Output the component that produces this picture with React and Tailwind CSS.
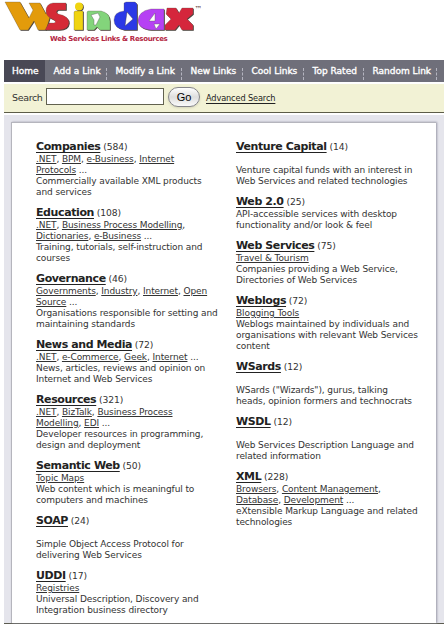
import React from "react";

const left = [
  { name: "Companies", count: 584, lines: [[".NET", "BPM", "e-Business", "Internet"], ["Protocols"], "Commercially available XML products", "and services"], tails: ["", " ..."] },
  { name: "Education", count: 108, lines: [[".NET", "Business Process Modelling"], ["Dictionaries", "e-Business"], "Training, tutorials, self-instruction and", "courses"], tails: [",", " ..."] },
  { name: "Governance", count: 46, lines: [["Governments", "Industry", "Internet", "Open"], ["Source"], "Organisations responsible for setting and", "maintaining standards"], tails: ["", " ..."] },
  { name: "News and Media", count: 72, lines: [[".NET", "e-Commerce", "Geek", "Internet"], "News, articles, reviews and opinion on", "Internet and Web Services"], tails: [" ..."] },
  { name: "Resources", count: 321, lines: [[".NET", "BizTalk", "Business Process"], ["Modelling", "EDI"], "Developer resources in programming,", "design and deployment"], tails: ["", " ..."] },
  { name: "Semantic Web", count: 50, lines: [["Topic Maps"], "Web content which is meaningful to", "computers and machines"] },
  { name: "SOAP", count: 24, lines: ["", "Simple Object Access Protocol for", "delivering Web Services"] },
  { name: "UDDI", count: 17, lines: [["Registries"], "Universal Description, Discovery and", "Integration business directory"] },
];

const right = [
  { name: "Venture Capital", count: 14, lines: ["", "Venture capital funds with an interest in", "Web Services and related technologies"] },
  { name: "Web 2.0", count: 25, lines: ["API-accessible services with desktop", "functionality and/or look & feel"] },
  { name: "Web Services", count: 75, lines: [["Travel & Tourism"], "Companies providing a Web Service,", "Directories of Web Services"] },
  { name: "Weblogs", count: 72, lines: [["Blogging Tools"], "Weblogs maintained by individuals and", "organisations with relevant Web Services", "content"] },
  { name: "WSards", count: 12, lines: ["", "WSards (\"Wizards\"), gurus, talking", "heads, opinion formers and technocrats"] },
  { name: "WSDL", count: 12, lines: ["", "Web Services Description Language and", "related information"] },
  { name: "XML", count: 228, lines: [["Browsers", "Content Management"], ["Database", "Development"], "eXtensible Markup Language and related", "technologies"], tails: [",", " ..."] },
];

const link = "underline decoration-1 underline-offset-[1px]";

function Line({ line, tail = "" }) {
  return (
    <div className="h-[11px]">
      {Array.isArray(line)
        ? line.map((t, i) => (
            <React.Fragment key={t}>
              {i > 0 && ", "}
              <a className={link}>{t}</a>
            </React.Fragment>
          ))
        : line}
      {tail}
    </div>
  );
}

function Category({ name, count, lines, tails = [] }) {
  return (
    <section className="mb-2">
      <h2 className="h-[14px] leading-[14px]">
        <a className="text-[11px] font-bold tracking-[-0.4px] text-[#222] underline decoration-1 underline-offset-2">{name}</a>
        <span className="text-[9.2px]"> ({count})</span>
      </h2>
      {lines.map((l, i) => (
        <Line key={i} line={l} tail={tails[i]} />
      ))}
    </section>
  );
}

const nav = [
  ["Add a Link", "w-[62px]"],
  ["Modify a Link", "w-[75px]"],
  ["New Links", "w-[61px]"],
  ["Cool Links", "w-[61px]"],
  ["Top Rated", "w-[60px]"],
  ["Random Link", "w-[73px]"],
];

const letters = [
  ["#e39b0b", "M5 2H20L29 18L33 10L29 3H40L46 14L50 4H54L46 30H38L34 21L28 30H20Z"],
  ["#d52b37", "M53 3H66V10H58Q55 12 58 14Q69 16 69 23Q68 30 59 30H45L49 23H54Q57 22 54 20Q46 17 46 11Q46 4 53 3Z"],
  ["#f0d411", "M75 11H83V30H74V12Z"],
  ["#83d47b", "M88 11H101Q110 13 110 21V30H100L97 27L94 30H87V12Z"],
  ["#2b39e6", "M124 11V3L126 2H135L137 4V30H124Q114 28 114 20Q114 12 124 11Z"],
  ["#b640f4", "M151 9H164V30H151Q138 29 138 20Q139 11 151 9Z"],
  ["#d5263c", "M167 8H176L179 13L182 8H193V14L187 19L193 25V30H182L179 25L175 30H165V25L171 19L166 14Z"],
];

function Logo() {
  return (
    <svg width="210" height="32" viewBox="0 0 210 32" className="block" aria-label="WSindex">
      <g transform="translate(.8 .8)" fill="#4a423c">
        {letters.map(([c, d]) => <path key={c} d={d} />)}
        <circle cx="79" cy="6.5" r="4" />
      </g>
      {letters.map(([c, d]) => <path key={c} d={d} fill={c} stroke="#5c5044" strokeWidth=".3" />)}
      <circle cx="79" cy="6.5" r="4" fill="#f0d411" />
      <path d="M91 15L98 13L100 17L96 25L94 25V20Z" fill="#fff" stroke="#555" strokeWidth=".4" />
      <path d="M127 12L133 19L125 26Z" fill="#fff" stroke="#333" strokeWidth=".4" />
      <path d="M155 13V21H149Z M154 24H160L156 29Z" fill="#fff" stroke="#555" strokeWidth=".4" />
      <text x="194.5" y="12" fontSize="8" fill="#644" fontFamily="DejaVu Sans, sans-serif">™</text>
    </svg>
  );
}

export default function App() {
  return (
    <div className="flex h-[624px] w-[444px] flex-col overflow-hidden bg-white pl-1 font-['DejaVu_Sans',Verdana,sans-serif] text-[#333]">
      <header className="h-[60px] shrink-0">
        <div className="-ml-1"><Logo /></div>
        <div className="ml-[46px] mt-[2px] whitespace-nowrap text-[7px] font-bold leading-[11px] tracking-[-0.34px] text-[#b52643]">Web Services Links &amp; Resources</div>
      </header>
      <nav className="flex h-[22px] shrink-0 bg-[#6f6f7a] text-[9px] leading-[22px] text-white [-webkit-text-stroke:0.35px_white]">
        <a className="w-[41px] bg-[#494855] pl-2">Home</a>
        {nav.map(([label, w]) => (
          <a key={label} className={`${w} flex shrink-0 items-end justify-between whitespace-nowrap pl-[8.5px]`}>
            <span>{label}</span>
            <i className="mb-[2px] h-3 border-l border-dashed border-[#b4b4bf]" />
          </a>
        ))}
      </nav>
      <form className="mt-[2px] flex h-[29px] shrink-0 border-b border-[#5d5d48] bg-[#f2f2d5] pl-2">
        <label className="mt-[7px] w-[34px] text-[9.5px] leading-[14px] tracking-[-0.35px]">Search</label>
        <input className="mt-1 h-[17px] w-[118px] rounded-none border border-[#62624f] bg-white" />
        <button className="ml-1 mt-[3px] h-5 w-8 rounded-full border border-[#85858a] bg-linear-to-b from-white via-[#dedede] to-[#fafafa] font-['Liberation_Sans',sans-serif] text-[11px] leading-[18px] text-black shadow-sm">Go</button>
        <a className="ml-[6px] mt-[7px] whitespace-nowrap text-[8.2px] leading-[14px] tracking-[-0.12px] text-[#222] underline decoration-1 underline-offset-2">Advanced Search</a>
      </form>
      <div className="mt-[2px] flex h-[509px] shrink-0 border-b border-[#5b5b50] bg-[#e5e5ec] pl-[7px] pr-2 pt-[7px]">
        <main className="flex h-full w-[425px] shrink-0 whitespace-nowrap border-l border-t border-[#b5b5bd] bg-white pl-6 pt-[17px] text-[9px] leading-[11px] tracking-[-0.1px] shadow-[1px_0_2px_#9999a8]">
          <div className="w-[200px] shrink-0">{left.map((c) => <Category key={c.name} {...c} />)}</div>
          <div>{right.map((c) => <Category key={c.name} {...c} />)}</div>
        </main>
      </div>
    </div>
  );
}
